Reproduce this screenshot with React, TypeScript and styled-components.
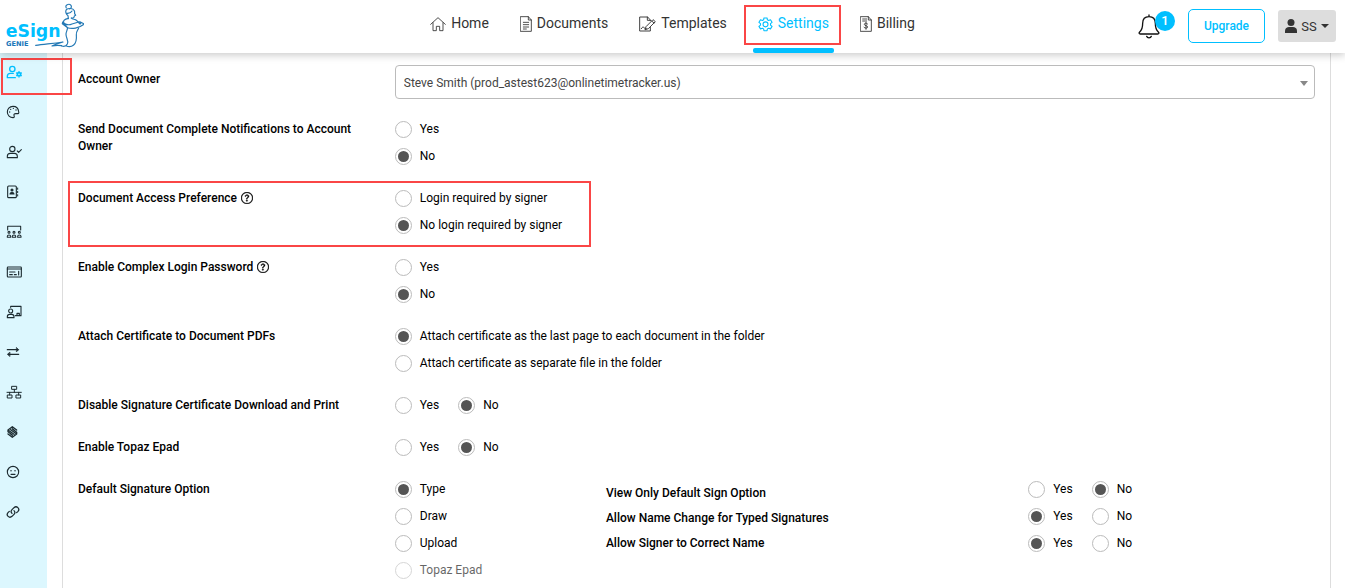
import React, { useId, useState } from 'react';
import styled, { createGlobalStyle, css } from 'styled-components';
import { BsQuestionCircle } from 'react-icons/bs';

const accent = '#00bfff';
const mark = '#fa4646';

const GlobalStyle = createGlobalStyle`
  *, *::before, *::after { box-sizing: border-box; }
  body {
    margin: 0;
    background: #fff;
    color: #000;
    font: 400 12px/17px Roboto, "Liberation Sans", sans-serif;
  }
  button, select, input { font: inherit; margin: 0; }
`;

const Page = styled.div`
  display: flex;
  flex-direction: column;
  min-height: 100vh;
`;

const Header = styled.header`
  position: sticky;
  top: 0;
  z-index: 2;
  display: grid;
  grid-template-columns: 1fr auto 1fr;
  height: 53px;
  background: #fff;
  box-shadow: 0 2px 8px rgba(0, 0, 0, 0.22);
`;

const LogoLink = styled.a`
  display: block;
  width: 84px;
  height: 52px;
  svg { display: block; }
`;

const Nav = styled.nav`
  display: flex;
  gap: 31px;
`;

const NavLink = styled.a<{ $active?: boolean }>`
  position: relative;
  display: flex;
  align-items: center;
  gap: 5px;
  padding-bottom: 7px;
  color: ${p => (p.$active ? accent : '#333')};
  font-size: 14px;
  line-height: 20px;
  text-decoration: none;
  svg { margin-top: 2px; }
  ${p => p.$active && css`
    &::after {
      content: '';
      position: absolute;
      left: -5px;
      right: -5px;
      bottom: 0;
      height: 5px;
      border-radius: 2px;
      background: ${accent};
    }
  `}
`;

const Highlight = styled.span<{ $inset: string }>`
  position: absolute;
  inset: ${p => p.$inset};
  z-index: 1;
  border: 2px solid ${mark};
  pointer-events: none;
`;

const Actions = styled.div`
  display: flex;
  align-items: center;
  justify-content: flex-end;
  padding: 0 9px 1px 0;
`;

const BellButton = styled.button`
  position: relative;
  display: flex;
  margin-right: 28px;
  padding: 0;
  border: 0;
  background: none;
  color: #111;
`;

const Badge = styled.span`
  position: absolute;
  top: -3px;
  left: 17px;
  width: 20px;
  height: 20px;
  border-radius: 50%;
  background: ${accent};
  color: #fff;
  font-size: 13px;
  font-weight: 500;
  line-height: 20px;
  text-align: center;
`;

const UpgradeButton = styled.button`
  width: 77px;
  height: 34px;
  margin-right: 13px;
  padding: 0;
  border: 1px solid ${accent};
  border-radius: 5px;
  background: #fff;
  color: ${accent};
  font-weight: 500;
`;

const UserButton = styled.button`
  display: flex;
  align-items: center;
  justify-content: center;
  gap: 4px;
  width: 58px;
  height: 32px;
  padding: 0;
  border: 0;
  border-radius: 3px;
  background: #ddd;
  color: #333;
  font-size: 13px;
`;

const Body = styled.div`
  display: flex;
  flex: 1;
`;

const Sidebar = styled.nav`
  display: flex;
  flex: none;
  flex-direction: column;
  gap: 24px;
  width: 47px;
  padding: 11px 6px;
  background: #dcf7fe;
`;

const SideLink = styled.a<{ $active?: boolean }>`
  position: relative;
  display: block;
  height: 16px;
  color: ${p => (p.$active ? accent : '#1c2b30')};
  svg { display: block; }
`;

const Panel = styled.main`
  flex: 1;
  min-width: 0;
  margin: 0 14px 0 15px;
  padding-top: 12px;
  border: solid #ddd;
  border-width: 0 1px;
`;

const Row = styled.div`
  position: relative;
  display: grid;
  grid-template-columns: 3fr 9fr;
  margin-bottom: 15px;
`;

const Name = styled.div`
  padding: 6px 15px 0;
  font-weight: 500;
  svg { margin-left: 4px; vertical-align: -2px; }
`;

const Cell = styled.div`
  min-width: 0;
  padding: 0 15px;
`;

const SelectBox = styled.div`
  position: relative;
  height: 35px;
  svg {
    position: absolute;
    top: 16px;
    right: 7px;
    pointer-events: none;
  }
`;

const Select = styled.select`
  appearance: none;
  width: 100%;
  height: 34px;
  padding: 2px 24px 0 8px;
  border: 1px solid #bbb;
  border-radius: 4px;
  background: #fff;
  color: #444;
`;

const Choices = styled.div<{ $inline?: boolean }>`
  display: flex;
  flex-direction: ${p => (p.$inline ? 'row' : 'column')};
  align-items: flex-start;
  column-gap: 19px;
`;

const Choice = styled.label<{ $disabled?: boolean }>`
  display: flex;
  align-items: flex-start;
  gap: 8px;
  height: 27px;
  padding-top: 6px;
  opacity: ${p => (p.$disabled ? 0.6 : 1)};
`;

const Radio = styled.input`
  appearance: none;
  display: grid;
  place-content: center;
  width: 17px;
  height: 17px;
  border: 1px solid #bbb;
  border-radius: 50%;
  background: #fff;
  &:checked::before {
    content: '';
    width: 11px;
    height: 11px;
    border-radius: 50%;
    background: #555;
  }
`;

const SignatureGrid = styled.div`
  display: grid;
  grid-template-columns: 2fr 4fr 3fr;
`;

const SubNames = styled.div`
  display: flex;
  flex-direction: column;
  gap: 8px;
  padding: 10px 15px 0;
  font-weight: 500;
`;

type RadioGroupProps = {
  options: string[];
  initial: string;
  inline?: boolean;
  disabled?: string;
  labelledBy: string;
};

function RadioGroup({ options, initial, inline, disabled, labelledBy }: RadioGroupProps) {
  const name = useId();
  const [value, setValue] = useState(initial);
  return (
    <Choices $inline={inline} role="radiogroup" aria-labelledby={labelledBy}>
      {options.map(option => (
        <Choice key={option} $disabled={option === disabled}>
          <Radio
            type="radio"
            name={name}
            checked={value === option}
            disabled={option === disabled}
            onChange={() => setValue(option)}
          />
          {option}
        </Choice>
      ))}
    </Choices>
  );
}

type SettingProps = Omit<RadioGroupProps, 'labelledBy'> & {
  label: string;
  help?: boolean;
  highlighted?: boolean;
};

function Setting({ label, help, highlighted, ...group }: SettingProps) {
  const id = useId();
  return (
    <Row>
      <Name id={id}>
        {label}
        {help && <BsQuestionCircle size={12} strokeWidth={0.5} />}
      </Name>
      <Cell>
        <RadioGroup {...group} labelledBy={id} />
      </Cell>
      {highlighted && <Highlight $inset="-3px auto -9px 5px" style={{ width: 523 }} />}
    </Row>
  );
}

function Logo() {
  return (
    <svg width="84" height="52" viewBox="0 0 252 156" role="img" aria-label="eSign Genie">
      <text x="17" y="111" fontFamily="'DejaVu Sans', sans-serif" fontWeight="700" fontSize="52" fill={accent}>eSign</text>
      <text x="18" y="138" fontFamily="'DejaVu Sans', sans-serif" fontWeight="700" fontSize="20" fill="#1976b9">GENIE</text>
      <g fill="none" stroke="#2479b5" strokeWidth="3.5" strokeLinecap="round" strokeLinejoin="round">
        <path d="M199 24c-6-9 8-15 14-8 3 5 0 9-4 11" />
        <path d="M199 29c7-6 20-4 24 3 2 4 0 6 1 9l3 5-4 2c0 5-3 7-9 6M199 29c-4 6-1 14 5 18l1 9M200 40c7 1 13-2 16-7" />
        <path d="M205 55c-12 2-16 8-14 15l12 14M214 54c3 5 8 3 12 5 6 2 9 9 14 13M188 66c8 8 19 10 28 6l20-6c5-1 8 2 5 6M188 66l-1 5 16 12c12 5 34 2 50-11l-12-6" />
        <path d="M203 83c-1 8-5 13-5 20 0 13 9 18 4 29-3 6-10 8-17 6M236 84c-3 8-8 11-7 20 1 12 1 24-8 31-6 5-16 6-23 2" />
        <path d="M107 136c26-4 49-5 82-10-13 4-26 8-33 12 8-2 16-3 29-1" />
      </g>
    </svg>
  );
}

type IconProps = { width?: number; children: React.ReactNode; box?: string; height?: number; weight?: number };

function Icon({ width = 16, height = 16, box = '0 0 48 48', weight = 3.3, children }: IconProps) {
  return (
    <svg
      width={width}
      height={height}
      viewBox={box}
      fill="none"
      stroke="currentColor"
      strokeWidth={weight}
      strokeLinecap="round"
      strokeLinejoin="round"
      aria-hidden="true"
    >
      {children}
    </svg>
  );
}

const gearPath =
  'M19 3h10l1 6 4 2 6-2 5 8-5 4v5l5 4-5 8-6-2-4 2-1 6H19l-1-6-4-2-6 2-5-8 5-4v-5l-5-4 5-8 6 2 4-2z';

const navItems = [
  {
    label: 'Home',
    icon: <Icon width={16} weight={2.6}><path d="M2 25 24 5l22 20M9 20v24h10V31h10v13h10V20" /></Icon>,
  },
  {
    label: 'Documents',
    icon: (
      <Icon width={12} box="0 0 36 48" weight={2.6}>
        <path d="M2 2h23l9 10v34H2zM25 2v10h9M10 19h16M10 26h16M10 33h16M10 39h9" />
      </Icon>
    ),
  },
  {
    label: 'Templates',
    icon: (
      <Icon width={17} box="0 0 51 48" weight={2.8}>
        <path d="M34 14v-2L26 3H2v42h32V34M25 3v10h9M22 31 42 11l7 6-21 21-9 3zM38 15l7 6M7 38c4-6 6-7 8-3 2 3 4 4 7 3" />
      </Icon>
    ),
  },
  {
    label: 'Settings',
    active: true,
    icon: <Icon width={15} height={15} weight={3.5}><path d={gearPath} /><circle cx="24" cy="23.500" r="8" /></Icon>,
  },
  {
    label: 'Billing',
    icon: (
      <Icon width={12} box="0 0 36 48" weight={2.6}>
        <path d="M2 2h23l9 10v34H2zM25 2v10h9M8 9h12M8 15h12M23 24c-3-4-10-3-10 1 0 5 10 3 10 8 0 4-8 5-11 1M18 19v21" />
      </Icon>
    ),
  },
];

const person = 'M4 41v-4c0-6 4-9 9-9h12c5 0 9 3 9 9v4z';
const sideItems = [
  {
    label: 'Account settings',
    active: true,
    icon: (
      <Icon weight={4}>
        <circle cx="19" cy="15" r="8" />
        <path d="M28 41H4v-4c0-6 4-9 9-9h9" />
        <circle cx="39" cy="31" r="5" strokeWidth="5" />
        <path strokeWidth="4" d="M39 23v.1M39 39v.1M32 27v.1M46 27v.1M32 35v.1M46 35v.1" />
      </Icon>
    ),
  },
  {
    label: 'Branding',
    icon: (
      <Icon>
        <path d="M21 7C10 7 4 15 4 24c0 10 8 17 17 17 5 0 4-4 3-7s1-5 5-5h7c2 0 3-2 2-6C37 13 30 7 21 7z" />
        <path strokeWidth="4" d="M11 24h.1M14 16h.1M22 13h.1M30 18h.1" />
      </Icon>
    ),
  },
  {
    label: 'Signers',
    icon: <Icon><circle cx="19" cy="15" r="8" /><path d={person} /><path d="m34 21 4 4 8-8" /></Icon>,
  },
  {
    label: 'Contacts',
    icon: (
      <Icon>
        <rect x="5" y="6" width="26" height="35" rx="3" />
        <path strokeWidth="3" d="M35 12v4M35 22v4M35 32v4" />
        <circle cx="18" cy="18" r="3" fill="currentColor" />
        <path fill="currentColor" d="M12 30c0-6 12-6 12 0z" />
      </Icon>
    ),
  },
  {
    label: 'Groups',
    icon: (
      <Icon weight={3.2}>
        <path d="M5 18V7h39v11" />
        <circle cx="9" cy="25" r="3" /><circle cx="24" cy="25" r="3" /><circle cx="40" cy="25" r="3" />
        <path d="M4 40v-3c0-5 10-5 10 0v3zM19 40v-3c0-5 10-5 10 0v3zM35 40v-3c0-5 10-5 10 0v3z" />
      </Icon>
    ),
  },
  {
    label: 'Payments',
    icon: (
      <Icon>
        <rect x="4" y="9" width="42" height="30" rx="2" />
        <path d="M4 15h42M11 24h16M11 32h8M25 32h6M38 22v11" />
      </Icon>
    ),
  },
  {
    label: 'Training',
    icon: (
      <Icon>
        <path d="M14 10V7h31v28H28M33 34v-6h7v6" />
        <circle cx="14" cy="21" r="6" />
        <path d="M4 41v-3c0-5 3-7 7-7h6c4 0 7 2 7 7v3z" />
      </Icon>
    ),
  },
  {
    label: 'Transfers',
    icon: (
      <Icon weight={3.8}>
        <path d="M4 17h32M10 31h28" />
        <path fill="currentColor" strokeWidth="2" d="m32 11 6 6-6 6zM11 25l-7 6 7 6z" />
      </Icon>
    ),
  },
  {
    label: 'Workflow',
    icon: (
      <Icon weight={3}>
        <path d="M18 7h14v9H18zM5 33h13v9H5zM31 33h13v9H31zM25 16v9M3 25h43M11 25v8M38 25v8" />
      </Icon>
    ),
  },
  {
    label: 'Integrations',
    icon: (
      <Icon weight={4}>
        <path d="M32 18 19 8 6 18l18 13M6 30l13 10 13-10L14 17M24 18l-5-4M14 30l5 4M6 18v5l13 10M32 30v-5L19 15" />
      </Icon>
    ),
  },
  {
    label: 'Feedback',
    icon: (
      <Icon>
        <circle cx="21" cy="24" r="17" />
        <path d="M15 31h12" /><path strokeWidth="4.500" d="M15 20h.1M27 20h.1" />
      </Icon>
    ),
  },
  {
    label: 'Links',
    icon: (
      <Icon weight={3.8}>
        <path d="M18 28c-4-4-3-8 0-11l6-6c8-7 19 3 12 11l-4 4" />
        <path d="M24 20c4 4 3 8 0 11l-6 6c-8 7-19-3-12-11l4-4" />
      </Icon>
    ),
  },
];

const yesNo = ['Yes', 'No'];
const signRules = [
  { label: 'View Only Default Sign Option', value: 'No' },
  { label: 'Allow Name Change for Typed Signatures', value: 'Yes' },
  { label: 'Allow Signer to Correct Name', value: 'Yes' },
];

export default function App() {
  return (
    <Page>
      <GlobalStyle />
      <Header>
        <LogoLink href="#home"><Logo /></LogoLink>
        <Nav aria-label="Main">
          {navItems.map(item => (
            <NavLink key={item.label} href={`#${item.label.toLowerCase()}`} $active={item.active}>
              {item.icon}
              {item.label}
              {item.active && <Highlight $inset="5px -12px 8px -14px" />}
            </NavLink>
          ))}
        </Nav>
        <Actions>
          <BellButton type="button" aria-label="Notifications">
            <Icon width={22} height={25} box="0 0 66 75" weight={4}>
              <path d="M33 7V3M33 8c-13 0-19 9-19 20 0 16-3 21-9 26-3 3-2 6 2 6h52c4 0 5-3 2-6-6-5-9-10-9-26 0-11-6-20-19-20zM26 67c2 6 12 6 14 0" />
            </Icon>
            <Badge>1</Badge>
          </BellButton>
          <UpgradeButton type="button">Upgrade</UpgradeButton>
          <UserButton type="button">
            <svg width="12" height="14" viewBox="0 0 12 14" fill="currentColor" aria-hidden="true">
              <circle cx="6" cy="3.500" r="3.500" />
              <path d="M0 14v-2c0-3 2-4 4-4h4c2 0 4 1 4 4v2z" />
            </svg>
            SS
            <svg width="8" height="4" viewBox="0 0 8 4" fill="currentColor" aria-hidden="true"><path d="M0 0h8L4 4z" /></svg>
          </UserButton>
        </Actions>
      </Header>
      <Body>
        <Sidebar aria-label="Settings sections">
          {sideItems.map(item => (
            <SideLink key={item.label} href="#section" aria-label={item.label} $active={item.active}>
              {item.icon}
              {item.active && <Highlight $inset="-6px -31px -15px -5px" />}
            </SideLink>
          ))}
        </Sidebar>
        <Panel>
          <Row>
            <Name as="label" htmlFor="account-owner">Account Owner</Name>
            <Cell>
              <SelectBox>
                <Select id="account-owner">
                  <option>Steve Smith (prod_astest623@onlinetimetracker.us)</option>
                </Select>
                <svg width="8" height="5" viewBox="0 0 8 5" fill="#888" aria-hidden="true"><path d="M0 0h8L4 5z" /></svg>
              </SelectBox>
            </Cell>
          </Row>
          <Setting label="Send Document Complete Notifications to Account Owner" options={yesNo} initial="No" />
          <Setting
            label="Document Access Preference"
            help
            highlighted
            options={['Login required by signer', 'No login required by signer']}
            initial="No login required by signer"
          />
          <Setting label="Enable Complex Login Password" help options={yesNo} initial="No" />
          <Setting
            label="Attach Certificate to Document PDFs"
            options={[
              'Attach certificate as the last page to each document in the folder',
              'Attach certificate as separate file in the folder',
            ]}
            initial="Attach certificate as the last page to each document in the folder"
          />
          <Setting label="Disable Signature Certificate Download and Print" inline options={yesNo} initial="No" />
          <Setting label="Enable Topaz Epad" inline options={yesNo} initial="No" />
          <Row>
            <Name id="signature-option">Default Signature Option</Name>
            <SignatureGrid>
              <Cell>
                <RadioGroup
                  labelledBy="signature-option"
                  options={['Type', 'Draw', 'Upload', 'Topaz Epad']}
                  initial="Type"
                  disabled="Topaz Epad"
                />
              </Cell>
              <SubNames>
                {signRules.map((rule, i) => <span key={rule.label} id={`rule-${i}`}>{rule.label}</span>)}
              </SubNames>
              <Cell>
                {signRules.map((rule, i) => (
                  <RadioGroup key={rule.label} labelledBy={`rule-${i}`} inline options={yesNo} initial={rule.value} />
                ))}
              </Cell>
            </SignatureGrid>
          </Row>
        </Panel>
      </Body>
    </Page>
  );
}
